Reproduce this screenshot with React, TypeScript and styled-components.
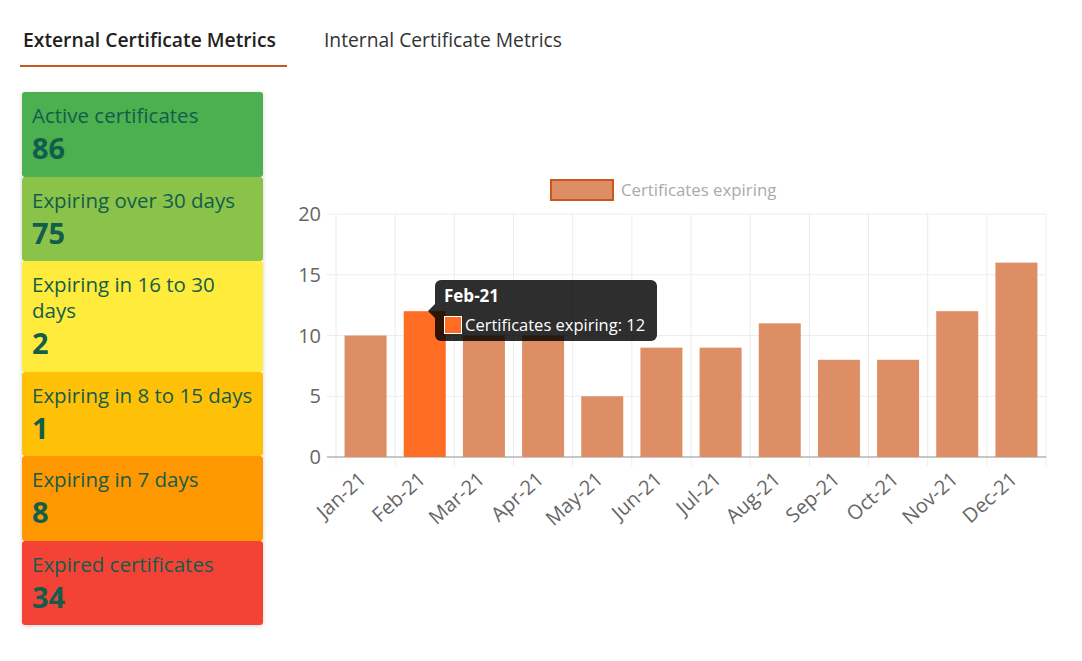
import React from "react";
import styled, { createGlobalStyle } from "styled-components";

const GlobalStyle = createGlobalStyle`
  html, body { margin: 0; padding: 0; background: #ffffff; }
  body { font-family: "Open Sans", "Noto Sans", Arial, sans-serif; }
  * { box-sizing: border-box; }
`;

const Page = styled.div`
  width: 1082px;
  height: 661px;
  padding: 27px 0 0 20px;
  overflow: hidden;
`;

const TabBar = styled.div`
  display: flex;
  align-items: flex-end;
  gap: 34px;
`;

const Tab = styled.div<{ $active?: boolean }>`
  padding: 0 ${(p) => (p.$active ? "11px" : "0")} 12px 3px;
  font-size: 19.3px;
  line-height: 26px;
  font-weight: ${(p) => (p.$active ? 600 : 400)};
  color: ${(p) => (p.$active ? "#222222" : "#333333")};
  border-bottom: 2px solid ${(p) => (p.$active ? "#c65a22" : "transparent")};
  white-space: nowrap;
`;

const Content = styled.div`
  display: flex;
  align-items: flex-start;
  gap: 17px;
  margin-top: 25px;
  padding-left: 2px;
`;

const CardColumn = styled.div`
  width: 241px;
  display: flex;
  flex-direction: column;
  border-radius: 3px;
  box-shadow: 0 1px 4px rgba(0, 0, 0, 0.18);
`;

const Card = styled.div<{ $bg: string }>`
  background: ${(p) => p.$bg};
  padding: 10px 5px 11.5px 10px;
  border-radius: 3px;
  color: #135d4b;
`;

const CardLabel = styled.div`
  font-size: 20.5px;
  line-height: 26px;
`;

const CardValue = styled.div`
  margin-top: 3px;
  font-size: 29px;
  line-height: 34px;
  font-weight: 700;
`;

const ChartWrap = styled.div`
  position: relative;
  width: 780px;
  height: 370px;
  margin-top: 78px;
`;

const ChartSvg = styled.svg`
  display: block;
  font-family: "Open Sans", "Noto Sans", Arial, sans-serif;
`;

const Tooltip = styled.div`
  position: absolute;
  left: 155px;
  top: 110px;
  width: 222px;
  height: 61px;
  padding: 4px 9px;
  background: rgba(0, 0, 0, 0.82);
  border-radius: 6px;
  color: #ffffff;
  white-space: nowrap;
  &::before {
    content: "";
    position: absolute;
    left: -7px;
    top: 24px;
    border-style: solid;
    border-width: 7px 7px 7px 0;
    border-color: transparent rgba(0, 0, 0, 0.82) transparent transparent;
  }
`;

const TipTitle = styled.div`
  font-size: 17px;
  line-height: 23px;
  font-weight: 700;
`;

const TipRow = styled.div`
  display: flex;
  align-items: center;
  gap: 3px;
  margin-top: 5px;
  font-size: 16.5px;
  line-height: 26px;
`;

const Swatch = styled.span`
  flex: none;
  width: 18px;
  height: 18px;
  background: #ff6d24;
  border: 1.5px solid #ffffff;
`;

const cards = [
  { label: "Active certificates", value: 86, bg: "#4caf50" },
  { label: "Expiring over 30 days", value: 75, bg: "#8bc34a" },
  { label: "Expiring in 16 to 30 days", value: 2, bg: "#ffeb3b" },
  { label: "Expiring in 8 to 15 days", value: 1, bg: "#ffc107" },
  { label: "Expiring in 7 days", value: 8, bg: "#ff9800" },
  { label: "Expired certificates", value: 34, bg: "#f44336" },
];

const months = [
  "Jan-21", "Feb-21", "Mar-21", "Apr-21", "May-21", "Jun-21",
  "Jul-21", "Aug-21", "Sep-21", "Oct-21", "Nov-21", "Dec-21",
];
const values = [10, 12, 10, 10, 5, 9, 9, 11, 8, 8, 12, 16];

// chart origin in page coordinates
const OX = 280;
const OY = 170;
const LEFT = 336 - OX;
const RIGHT = 1046 - OX;
const TOP = 214 - OY;
const BOTTOM = 457 - OY;
const CAT = (RIGHT - LEFT) / 12;
const UNIT = (BOTTOM - TOP) / 20;
const BAR = 42;

function Chart() {
  return (
    <ChartSvg width={780} height={370} viewBox="0 0 780 370">
      {/* legend */}
      <rect x={551 - OX} y={180 - OY} width={62} height={20} fill="#de8e65" stroke="#c8581e" strokeWidth={2} />
      <text x={621 - OX} y={196 - OY} fontSize={16.8} fill="#aaaaaa">
        Certificates expiring
      </text>

      {/* vertical grid lines */}
      {Array.from({ length: 13 }).map((_, i) => (
        <line
          key={"v" + i}
          x1={LEFT + i * CAT}
          x2={LEFT + i * CAT}
          y1={TOP}
          y2={BOTTOM + 9}
          stroke="#ececec"
          strokeWidth={1}
        />
      ))}

      {/* horizontal grid lines + y labels */}
      {[0, 5, 10, 15, 20].map((v) => {
        const y = BOTTOM - v * UNIT;
        return (
          <g key={"h" + v}>
            <line
              x1={LEFT - 9}
              x2={RIGHT}
              y1={y}
              y2={y}
              stroke={v === 0 ? "#b5b5b5" : "#ececec"}
              strokeWidth={v === 0 ? 1.5 : 1}
            />
            <text x={LEFT - 15} y={y + 7} fontSize={20} fill="#666666" textAnchor="end">
              {v}
            </text>
          </g>
        );
      })}

      {/* bars */}
      {values.map((v, i) => {
        const cx = LEFT + (i + 0.5) * CAT;
        const h = v * UNIT;
        return (
          <rect
            key={"b" + i}
            x={cx - BAR / 2}
            y={BOTTOM - h}
            width={BAR}
            height={h}
            fill={i === 1 ? "#ff6d24" : "#de8e65"}
          />
        );
      })}

      {/* x labels */}
      {months.map((m, i) => {
        const cx = LEFT + (i + 0.5) * CAT + 2;
        const y = BOTTOM + 24;
        return (
          <text
            key={"x" + i}
            x={cx}
            y={y}
            fontSize={20}
            fill="#666666"
            textAnchor="end"
            transform={`rotate(-42 ${cx} ${y})`}
          >
            {m}
          </text>
        );
      })}
    </ChartSvg>
  );
}

export default function App() {
  return (
    <Page>
      <GlobalStyle />
      <TabBar>
        <Tab $active>External Certificate Metrics</Tab>
        <Tab>Internal Certificate Metrics</Tab>
      </TabBar>
      <Content>
        <CardColumn>
          {cards.map((c) => (
            <Card key={c.label} $bg={c.bg}>
              <CardLabel>{c.label}</CardLabel>
              <CardValue>{c.value}</CardValue>
            </Card>
          ))}
        </CardColumn>
        <ChartWrap>
          <Chart />
          <Tooltip>
            <TipTitle>Feb-21</TipTitle>
            <TipRow>
              <Swatch />
              Certificates expiring: 12
            </TipRow>
          </Tooltip>
        </ChartWrap>
      </Content>
    </Page>
  );
}
